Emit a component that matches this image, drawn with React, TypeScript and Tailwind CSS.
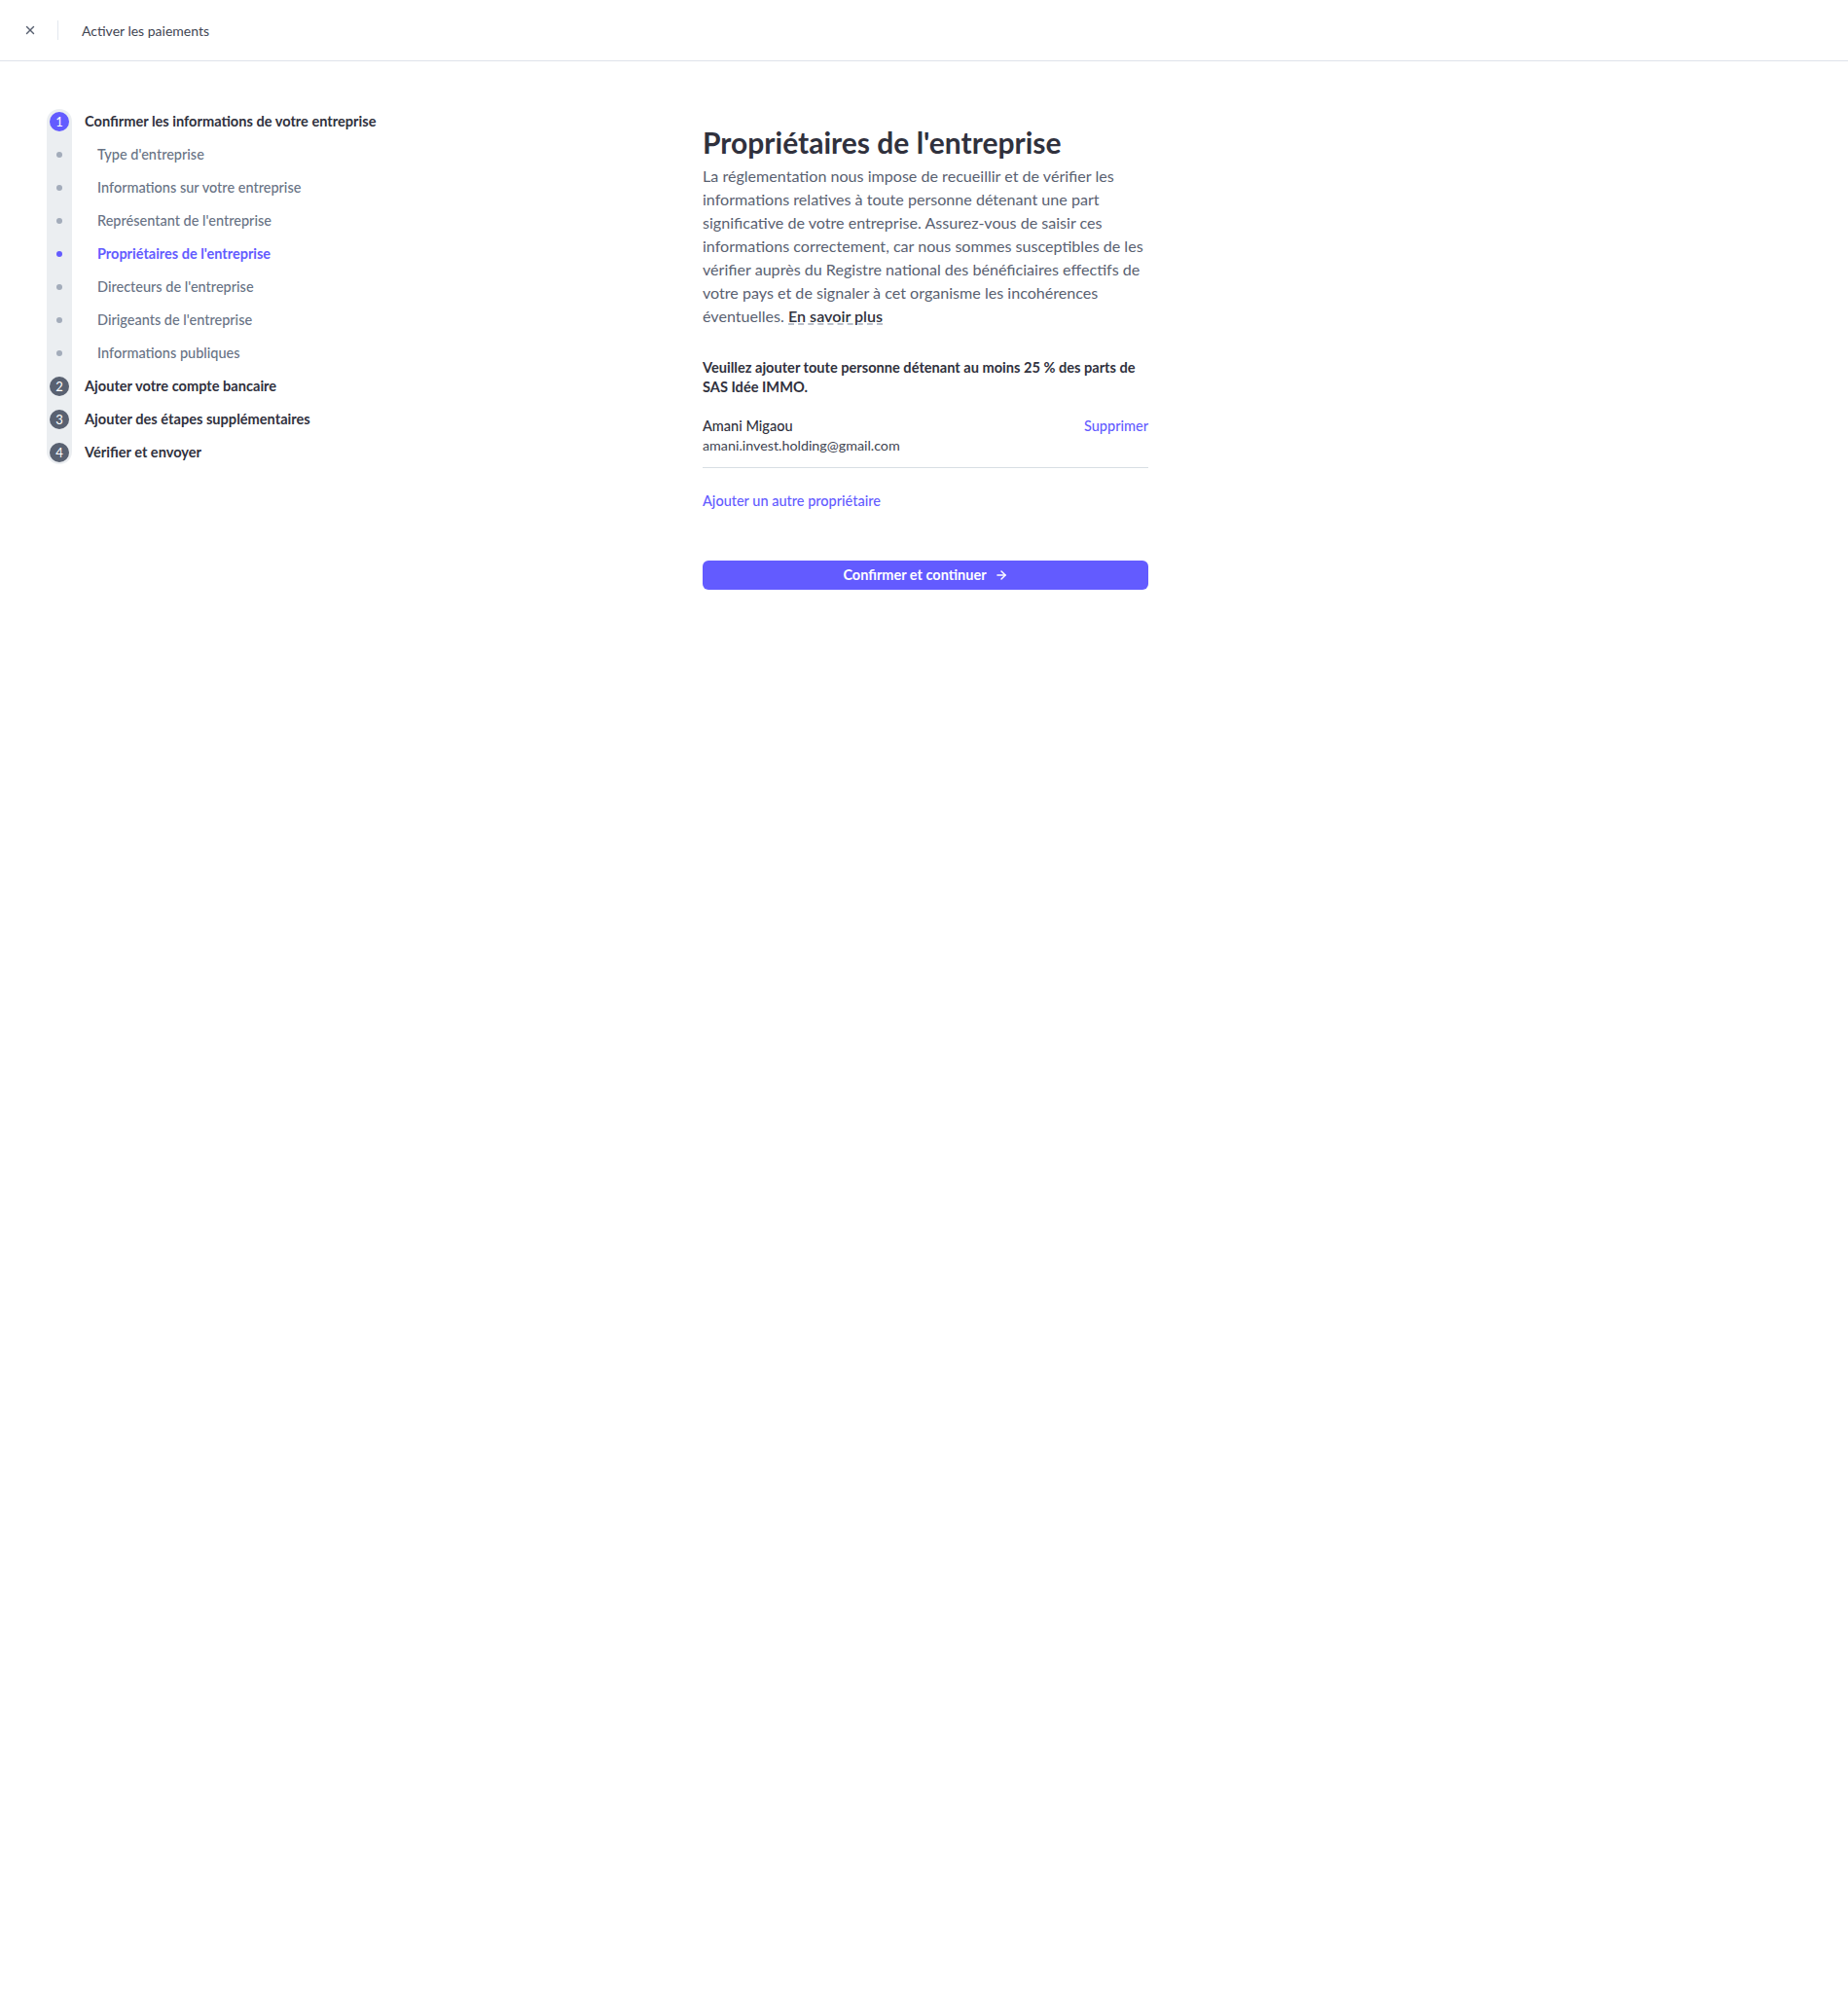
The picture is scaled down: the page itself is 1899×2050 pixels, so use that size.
import { X, ArrowRight } from 'lucide-react'

const FONT = '"Segoe UI", Lato, "Noto Sans", sans-serif'

type SubStep = { label: string; active?: boolean }

const subSteps: SubStep[] = [
  { label: "Type d'entreprise" },
  { label: 'Informations sur votre entreprise' },
  { label: "Représentant de l'entreprise" },
  { label: "Propriétaires de l'entreprise", active: true },
  { label: "Directeurs de l'entreprise" },
  { label: "Dirigeants de l'entreprise" },
  { label: 'Informations publiques' },
]

const laterSteps = [
  { n: 2, label: 'Ajouter votre compte bancaire' },
  { n: 3, label: 'Ajouter des étapes supplémentaires' },
  { n: 4, label: 'Vérifier et envoyer' },
]

function StepCircle({ n, current }: { n: number; current?: boolean }) {
  return (
    <span
      className={
        current
          ? 'flex h-5 w-5 items-center justify-center rounded-full bg-[#635bff] text-[13px] leading-none text-white'
          : 'flex h-5 w-5 items-center justify-center rounded-full bg-[#596171] text-[13px] leading-none text-white'
      }
    >
      {n}
    </span>
  )
}

function Sidebar() {
  return (
    <nav className="relative ml-[48px] mt-[45px] w-[400px]">
      {/* gray track behind the steps */}
      <div className="absolute left-0 top-[4px] bottom-[5px] w-[26px] rounded-full bg-[#ebeef1]" />
      <ul className="relative">
        <li className="flex h-[34px] items-center">
          <span className="flex w-[26px] justify-center">
            <StepCircle n={1} current />
          </span>
          <span className="ml-[13px] text-[14.6px] font-bold text-[#30313d]">
            Confirmer les informations de votre entreprise
          </span>
        </li>
        {subSteps.map((s) => (
          <li key={s.label} className="flex h-[34px] items-center">
            <span className="flex w-[26px] justify-center">
              <span
                className={
                  s.active
                    ? 'h-[6px] w-[6px] rounded-full bg-[#635bff]'
                    : 'h-[6px] w-[6px] rounded-full bg-[#a3acba]'
                }
              />
            </span>
            <span
              className={
                s.active
                  ? 'ml-[26px] text-[14.5px] font-bold text-[#635bff]'
                  : 'ml-[26px] text-[14.5px] font-medium text-[#687385]'
              }
            >
              {s.label}
            </span>
          </li>
        ))}
        {laterSteps.map((s) => (
          <li key={s.n} className="flex h-[34px] items-center">
            <span className="flex w-[26px] justify-center">
              <StepCircle n={s.n} />
            </span>
            <span className="ml-[13px] text-[14.6px] font-bold text-[#30313d]">
              {s.label}
            </span>
          </li>
        ))}
      </ul>
    </nav>
  )
}

function OwnersForm() {
  return (
    <section className="ml-[274px] mt-[65px] w-[458px]">
      <h1 className="text-[30px] font-bold leading-[36px] text-[#30313d]">
        Propriétaires de l'entreprise
      </h1>
      <p className="mt-[5px] text-[16.1px] leading-[24px] text-[#596171]">
        La réglementation nous impose de recueillir et de vérifier les informations relatives à
        toute personne détenant une part significative de votre entreprise. Assurez-vous de saisir
        ces informations correctement, car nous sommes susceptibles de les vérifier auprès du
        Registre national des bénéficiaires effectifs de votre pays et de signaler à cet organisme
        les incohérences éventuelles.{' '}
        <a className="inline-block font-semibold leading-[20px] text-[#30313d] underline decoration-dashed decoration-[#a3acba] underline-offset-2">
          En savoir plus
        </a>
      </p>

      <p className="mt-[31px] text-[14.6px] font-bold leading-[20px] text-[#30313d]">
        Veuillez ajouter toute personne détenant au moins 25 % des parts de SAS Idée IMMO.
      </p>

      <div className="mt-[20px] border-b border-[#d8dee4] pb-[12px]">
        <div className="flex items-center justify-between">
          <span className="text-[14.5px] font-medium leading-[20px] text-[#30313d]">Amani Migaou</span>
          <button className="text-[14.5px] font-medium leading-[20px] text-[#635bff]">Supprimer</button>
        </div>
        <div className="text-[14.3px] leading-[20px] text-[#414552]">amani.invest.holding@gmail.com</div>
      </div>

      <button className="mt-[24px] block text-[14.5px] font-medium leading-[20px] text-[#635bff]">
        Ajouter un autre propriétaire
      </button>

      <button className="mt-[51px] flex h-[30px] w-full items-center justify-center gap-2 rounded-md bg-[#635bff] text-[14.5px] font-bold text-white">
        Confirmer et continuer
        <ArrowRight size={14} strokeWidth={2.5} />
      </button>
    </section>
  )
}

export default function App() {
  return (
    <div className="min-h-screen bg-white" style={{ fontFamily: FONT }}>
      <header className="flex h-[63px] items-center border-b border-[#dfe3ea]">
        <button className="ml-[24px] flex h-[14px] w-[14px] items-center justify-center text-[#596171]">
          <X size={14} strokeWidth={2.5} />
        </button>
        <span className="ml-[21px] h-[20px] w-px bg-[#e3e8ee]" />
        <span className="ml-[24px] text-[14px] text-[#414552]">Activer les paiements</span>
      </header>
      <div className="flex items-start">
        <Sidebar />
        <OwnersForm />
      </div>
    </div>
  )
}
